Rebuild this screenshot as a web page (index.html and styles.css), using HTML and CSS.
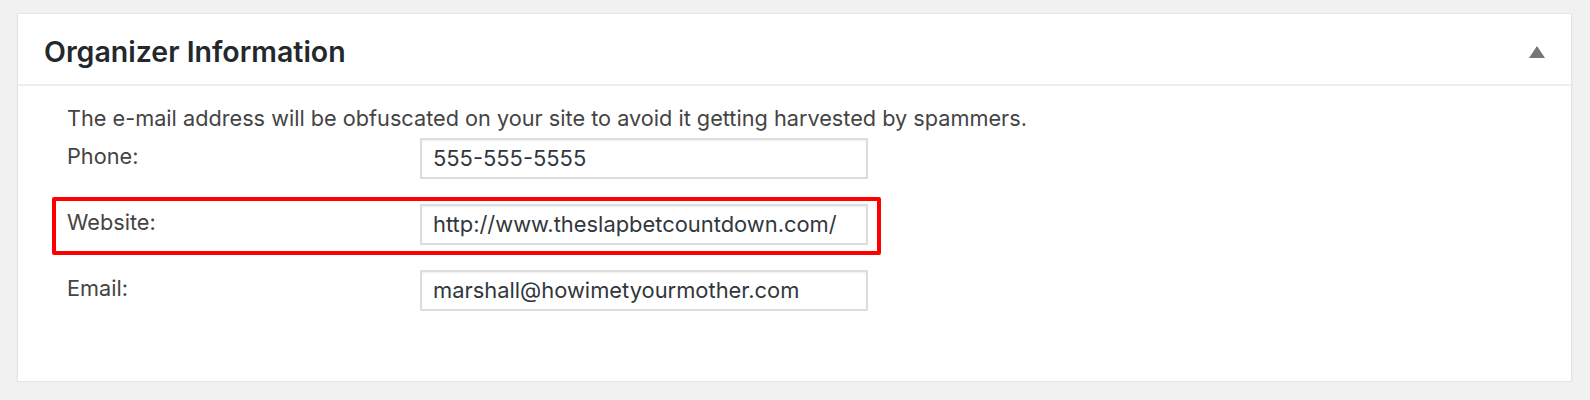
FILE: index.html
```html
<!DOCTYPE html>
<html lang="en">
<head>
<meta charset="utf-8">
<title>Organizer Information</title>
<link rel="stylesheet" href="styles.css">
</head>
<body>
  <div class="postbox">
    <div class="postbox-header">
      <h2 class="postbox-title">Organizer Information</h2>
      <svg class="toggle" width="16" height="12" viewBox="0 0 16 12" aria-hidden="true">
        <polygon points="8,0 16,12 0,12" fill="#72777c"/>
      </svg>
    </div>
    <div class="inside">
      <p class="desc">The e-mail address will be obfuscated on your site to avoid it getting harvested by spammers.</p>
      <div class="field-row">
        <label class="field-label">Phone:</label>
        <div class="field-input">555-555-5555</div>
      </div>
      <div class="field-row highlighted">
        <label class="field-label">Website:</label>
        <div class="field-input">http://www.theslapbetcountdown.com/</div>
      </div>
      <div class="field-row">
        <label class="field-label">Email:</label>
        <div class="field-input">marshall@howimetyourmother.com</div>
      </div>
    </div>
  </div>
</body>
</html>
```

FILE: styles.css
```css
* { box-sizing: border-box; }

html, body {
  margin: 0;
  background: #f1f1f1;
}

body {
  padding: 13px 18px 0 17px;
  font-family: Inter, "Noto Sans", "Liberation Sans", sans-serif;
}

.postbox {
  width: 1555px;
  background: #fff;
  border: 1px solid #e5e5e5;
  box-shadow: 0 1px 2px rgba(0, 0, 0, 0.05);
}

.postbox-header {
  display: flex;
  justify-content: space-between;
  align-items: center;
  padding: 23px 26px 18px 26px;
  border-bottom: 2px solid #eeeeee;
}

.postbox-title {
  margin: 0;
  font-size: 28.5px;
  line-height: 29px;
  font-weight: 600;
  color: #23282d;
}

.toggle {
  display: block;
  margin-top: 1px;
}

.inside {
  padding: 17px 0 70px 49px;
}

.desc {
  margin: 0;
  font-size: 21.7px;
  line-height: 30px;
  color: #444;
}

.field-row {
  display: flex;
  align-items: flex-start;
  width: fit-content;
  margin-top: 25px;
}

.desc + .field-row {
  margin-top: 5px;
}

.field-label {
  width: 353px;
  flex: none;
  padding-top: 3px;
  font-size: 21.7px;
  line-height: 30px;
  color: #444;
}

.field-input {
  width: 448px;
  height: 41px;
  border: 2px solid #dddddd;
  box-shadow: inset 0 1px 2px rgba(0, 0, 0, 0.07);
  padding: 0 11px;
  font-size: 21.9px;
  line-height: 37px;
  color: #32373c;
  white-space: nowrap;
  overflow: hidden;
}

.highlighted {
  position: relative;
}

.highlighted::after {
  content: "";
  position: absolute;
  left: -15px;
  top: -7px;
  right: -13px;
  bottom: -10px;
  border: 4px solid #ff0000;
  border-radius: 2px;
  pointer-events: none;
}
```
